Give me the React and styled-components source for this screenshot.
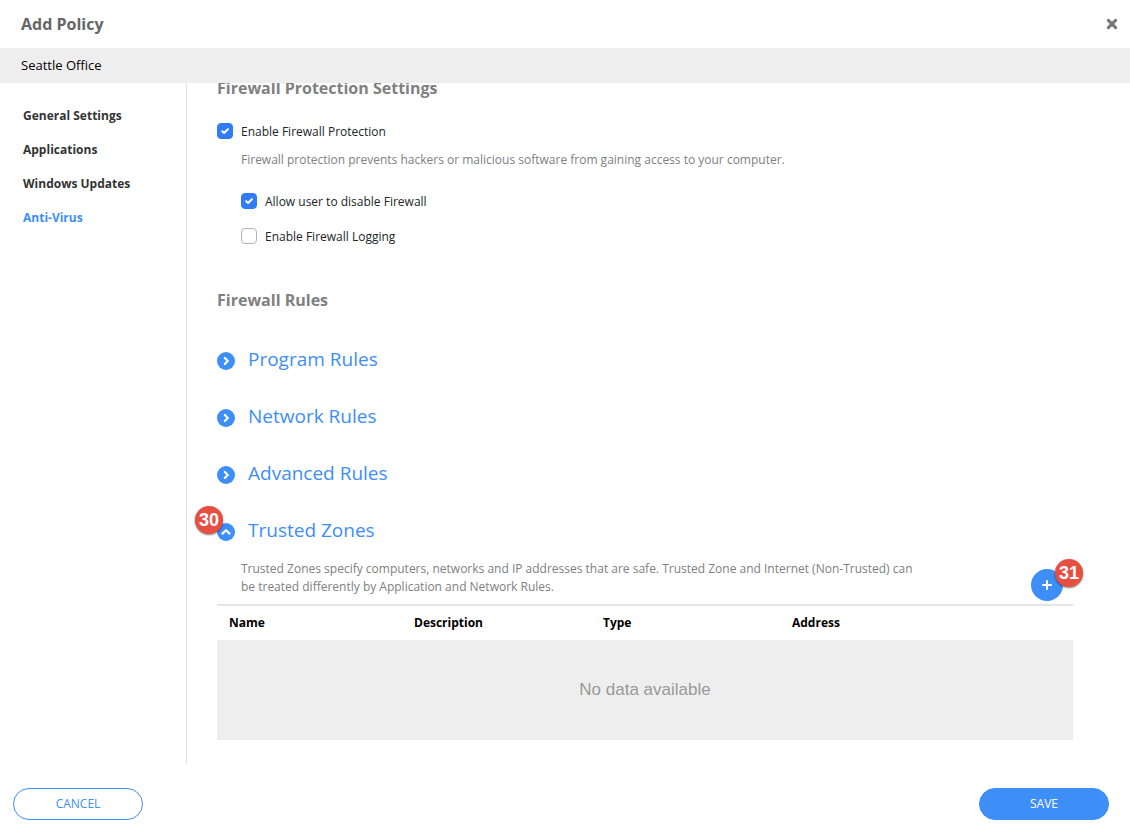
import React, { useLayoutEffect, useRef, useState } from "react";
import styled, { createGlobalStyle } from "styled-components";

const GlobalStyle = createGlobalStyle`
  * {
    box-sizing: border-box;
  }
  body {
    margin: 0;
    background: #fff;
    color: #212529;
    font-family: "Open Sans", sans-serif;
    font-size: 12px;
    line-height: 18px;
  }
  button {
    padding: 0;
    border: 0;
    background: none;
    font-family: inherit;
    cursor: pointer;
  }
`;

const Dialog = styled.div`
  display: flex;
  flex-direction: column;
  height: 100vh;
`;

const Header = styled.header`
  display: flex;
  align-items: center;
  justify-content: space-between;
  height: 48px;
  flex-shrink: 0;
  padding: 0 12px 0 21px;
  h1 {
    margin: 0;
    font-size: 16px;
    line-height: 24px;
    font-weight: 700;
    color: #666;
  }
`;

const CloseButton = styled.button`
  display: flex;
  color: #757575;
`;

const PolicyName = styled.div`
  flex-shrink: 0;
  padding: 8px 21px 9px;
  background: #eee;
  color: #000;
  font-size: 13px;
`;

const Body = styled.div`
  display: flex;
  flex: 1;
  min-height: 0;
`;

const Sidebar = styled.nav`
  display: flex;
  flex-direction: column;
  width: 187px;
  flex-shrink: 0;
  padding: 16px 23px;
  border-right: 1px solid #dee2e6;
`;

const SidebarLink = styled.a`
  font-weight: 700;
  line-height: 34px;
  text-decoration: none;
  color: ${({ $active }) => ($active ? "#3e8ef7" : "#333")};
`;

const Content = styled.main`
  flex: 1;
  min-width: 0;
  padding: 24px 57px 24px 30px;
  overflow-y: auto;
  scrollbar-width: none;
`;

const SectionTitle = styled.h2`
  margin: 0;
  font-size: 16px;
  line-height: 24px;
  font-weight: 700;
  color: #808080;
`;

const Options = styled.div`
  display: flex;
  flex-direction: column;
  padding: 22px 0 41px;
`;

const SubOptions = styled.div`
  display: flex;
  flex-direction: column;
  gap: 15px;
  padding: 23px 0 0 24px;
`;

const CheckLabel = styled.label`
  display: flex;
  align-items: center;
  gap: 8px;
  height: 20px;
  cursor: pointer;
`;

const CheckBox = styled.span`
  display: grid;
  width: 16px;
  height: 16px;
  margin-bottom: 2px;
  input,
  svg {
    grid-area: 1 / 1;
  }
  input {
    appearance: none;
    width: 16px;
    height: 16px;
    margin: 0;
    border: 1px solid #adb5bd;
    border-radius: 4px;
    background: #fff;
  }
  input:checked {
    border-color: #2f7cf6;
    background: #2f7cf6;
  }
  svg {
    color: #fff;
    pointer-events: none;
    z-index: 1;
  }
`;

const Hint = styled.p`
  margin: 0;
  padding-left: 24px;
  color: #808080;
`;

const OptionHint = styled(Hint)`
  padding-top: 9px;
`;

const Rules = styled.div`
  display: flex;
  flex-direction: column;
  gap: 29px;
  padding-top: 33px;
`;

const RuleToggle = styled.button`
  display: flex;
  align-items: center;
  gap: 13px;
  height: 28px;
  font-size: 19px;
  line-height: 28px;
  color: #3e8ef7;
`;

const RuleIcon = styled.span`
  position: relative;
  display: flex;
  width: 18px;
  height: 18px;
  margin-top: 4px;
  border-radius: 50%;
  background: #3e8ef7;
  color: #fff;
`;

const Marker = styled.span`
  position: absolute;
  top: ${({ $top }) => $top}px;
  left: ${({ $left }) => $left}px;
  width: 28px;
  height: 28px;
  border-radius: 50%;
  background: #e84f43;
  box-shadow: 0 1px 2px rgba(0, 0, 0, 0.5);
  color: #fff;
  font: 700 18px/28px "Liberation Sans", sans-serif;
  text-align: center;
`;

const ZoneIntro = styled.div`
  display: flex;
  align-items: flex-end;
  justify-content: space-between;
  padding: 16px 10px 3px 0;
  ${Hint} {
    max-width: 710px;
    padding-bottom: 5px;
  }
`;

const AddButton = styled.button`
  position: relative;
  display: flex;
  align-items: center;
  justify-content: center;
  width: 32px;
  height: 32px;
  flex-shrink: 0;
  border-radius: 50%;
  background: #3e8ef7;
  color: #fff;
`;

const ZoneTable = styled.table`
  width: 100%;
  border-collapse: separate;
  border-spacing: 0;
  border-top: 2px solid #e5e5e5;
  table-layout: fixed;
  th {
    height: 34px;
    padding: 0 12px;
    font-weight: 700;
    text-align: left;
    color: #000;
  }
  td {
    height: 100px;
    padding: 0;
    background: #eee;
    color: #999;
    font-family: "Liberation Sans", sans-serif;
    font-size: 17px;
    text-align: center;
  }
`;

const Column = styled.col`
  width: ${({ $width }) => $width};
`;

const Footer = styled.footer`
  display: flex;
  justify-content: space-between;
  flex-shrink: 0;
  padding: 24px 21px 9px 13px;
`;

const FooterButton = styled.button`
  width: 130px;
  height: 32px;
  padding-bottom: 2px;
  border: 1px solid #3e8ef7;
  border-radius: 16px;
  background: ${({ $primary }) => ($primary ? "#3e8ef7" : "#fff")};
  color: ${({ $primary }) => ($primary ? "#fff" : "#3e8ef7")};
  font-size: 12px;
`;

const icons = {
  check: { size: 16, width: 2, d: "M5.2 8.2 7.1 10 10.9 6.2" },
  right: { size: 18, width: 2.2, d: "M7.8 6 10.8 9 7.8 12" },
  up: { size: 18, width: 2.2, d: "M5.4 10.6 9 7.2 12.6 10.6" },
  plus: { size: 32, width: 2, d: "M16 12v8M12 16h8" },
  close: { size: 12, width: 3, d: "M2.4 2.4 9.6 9.6M9.6 2.4 2.4 9.6" },
};

const Icon = ({ name }) => {
  const { size, width, d } = icons[name];
  return (
    <svg width={size} height={size} viewBox={`0 0 ${size} ${size}`} fill="none" aria-hidden="true">
      <path d={d} stroke="currentColor" strokeWidth={width} strokeLinecap="round" strokeLinejoin="round" />
    </svg>
  );
};

const links = ["General Settings", "Applications", "Windows Updates", "Anti-Virus"];
const rules = ["Program Rules", "Network Rules", "Advanced Rules"];
const columns = [
  { name: "Name", width: "185px" },
  { name: "Description", width: "189px" },
  { name: "Type", width: "189px" },
  { name: "Address", width: "auto" },
];

const Check = ({ label, defaultChecked = false }) => {
  const [checked, setChecked] = useState(defaultChecked);
  return (
    <CheckLabel>
      <CheckBox>
        <input type="checkbox" checked={checked} onChange={(e) => setChecked(e.target.checked)} />
        {checked && <Icon name="check" />}
      </CheckBox>
      {label}
    </CheckLabel>
  );
};

const App = () => {
  const contentRef = useRef(null);

  useLayoutEffect(() => {
    contentRef.current.scrollTop = 32;
  }, []);

  return (
    <Dialog>
      <GlobalStyle />
      <Header>
        <h1>Add Policy</h1>
        <CloseButton type="button" aria-label="Close">
          <Icon name="close" />
        </CloseButton>
      </Header>
      <PolicyName>Seattle Office</PolicyName>
      <Body>
        <Sidebar>
          {links.map((name) => (
            <SidebarLink key={name} href="#" $active={name === "Anti-Virus"}>
              {name}
            </SidebarLink>
          ))}
        </Sidebar>
        <Content ref={contentRef}>
          <SectionTitle>Firewall Protection Settings</SectionTitle>
          <Options>
            <Check label="Enable Firewall Protection" defaultChecked />
            <OptionHint>
              Firewall protection prevents hackers or malicious software from gaining access to your computer.
            </OptionHint>
            <SubOptions>
              <Check label="Allow user to disable Firewall" defaultChecked />
              <Check label="Enable Firewall Logging" />
            </SubOptions>
          </Options>
          <SectionTitle>Firewall Rules</SectionTitle>
          <Rules>
            {rules.map((name) => (
              <RuleToggle key={name} type="button" aria-expanded="false">
                <RuleIcon>
                  <Icon name="right" />
                </RuleIcon>
                {name}
              </RuleToggle>
            ))}
            <RuleToggle type="button" aria-expanded="true">
              <RuleIcon>
                <Icon name="up" />
                <Marker $top={-17} $left={-22}>30</Marker>
              </RuleIcon>
              Trusted Zones
            </RuleToggle>
          </Rules>
          <ZoneIntro>
            <Hint>
              Trusted Zones specify computers, networks and IP addresses that are safe. Trusted Zone and Internet
              (Non-Trusted) can be treated differently by Application and Network Rules.
            </Hint>
            <AddButton type="button" aria-label="Add trusted zone">
              <Icon name="plus" />
              <Marker $top={-10} $left={24}>31</Marker>
            </AddButton>
          </ZoneIntro>
          <ZoneTable>
            <colgroup>
              {columns.map(({ name, width }) => (
                <Column key={name} $width={width} />
              ))}
            </colgroup>
            <thead>
              <tr>
                {columns.map(({ name }) => (
                  <th key={name} scope="col">{name}</th>
                ))}
              </tr>
            </thead>
            <tbody>
              <tr>
                <td colSpan={4}>No data available</td>
              </tr>
            </tbody>
          </ZoneTable>
        </Content>
      </Body>
      <Footer>
        <FooterButton type="button">CANCEL</FooterButton>
        <FooterButton type="button" $primary>SAVE</FooterButton>
      </Footer>
    </Dialog>
  );
};

export default App;
